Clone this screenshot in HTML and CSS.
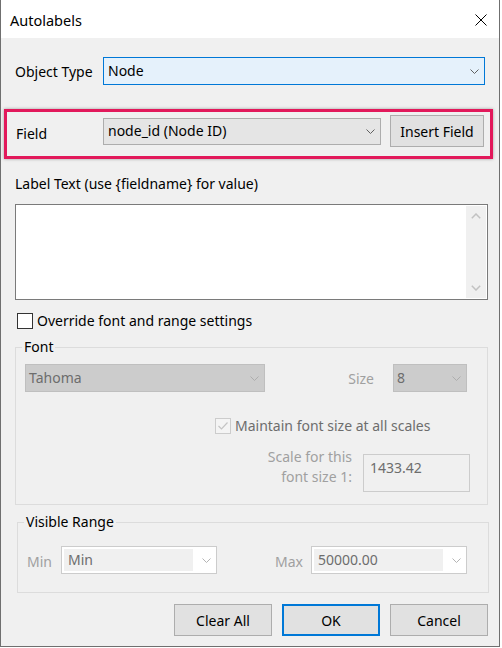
FILE: index.html
```html
<!DOCTYPE html>
<html lang="en">
<head>
  <meta charset="UTF-8">
  <title>Autolabels</title>
  <link rel="stylesheet" href="styles.css">
</head>
<body>
<div class="window">
  <div class="titlebar">
    <span class="title">Autolabels</span>
    <svg class="close" width="12" height="12" viewBox="0 0 12 12"><path d="M0.5 0.5 L11.5 11.5 M11.5 0.5 L0.5 11.5" stroke="#000" stroke-width="1" fill="none"/></svg>
  </div>
  <div class="content">
    <!--对象类型-->
    <div class="row row-type">
      <span class="lbl lbl-type">Object Type</span>
      <div class="combo combo-focus">
        <span>Node</span>
        <svg width="9" height="5" viewBox="0 0 9 5"><path d="M0.5 0.5 L4.5 4.5 L8.5 0.5" fill="none" stroke="#606060"/></svg>
      </div>
    </div>
    <!--字段(高亮框)-->
    <div class="highlight">
      <span class="lbl lbl-field">Field</span>
      <div class="combo combo-field">
        <span>node_id (Node ID)</span>
        <svg width="9" height="5" viewBox="0 0 9 5"><path d="M0.5 0.5 L4.5 4.5 L8.5 0.5" fill="none" stroke="#606060"/></svg>
      </div>
      <button class="btn btn-insert">Insert Field</button>
    </div>
    <div class="caption">Label Text (use {fieldname} for value)</div>
    <div class="textbox">
      <div class="scrollbar">
        <svg width="10" height="6" viewBox="0 0 10 6"><path d="M0.8 5.2 L5 1 L9.2 5.2" fill="none" stroke="#c2c2c2" stroke-width="1.5"/></svg>
        <svg width="10" height="6" viewBox="0 0 10 6"><path d="M0.8 0.8 L5 5 L9.2 0.8" fill="none" stroke="#c2c2c2" stroke-width="1.5"/></svg>
      </div>
    </div>
    <div class="check-row">
      <span class="check"></span>
      <span>Override font and range settings</span>
    </div>
    <!--字体-->
    <fieldset class="group group-font">
      <legend>Font</legend>
      <div class="font-row">
        <div class="combo combo-disabled combo-font">
          <span>Tahoma</span>
          <svg width="9" height="5" viewBox="0 0 9 5"><path d="M0.5 0.5 L4.5 4.5 L8.5 0.5" fill="none" stroke="#adadad"/></svg>
        </div>
        <span class="dim size-lbl">Size</span>
        <div class="combo combo-disabled combo-size">
          <span>8</span>
          <svg width="9" height="5" viewBox="0 0 9 5"><path d="M0.5 0.5 L4.5 4.5 L8.5 0.5" fill="none" stroke="#adadad"/></svg>
        </div>
      </div>
      <div class="check-row maintain">
        <span class="check check-disabled">
          <svg width="14" height="14" viewBox="0 0 14 14"><path d="M2.5 7 L5.5 10 L11.5 3.5" fill="none" stroke="#c4c4c4" stroke-width="1.2"/></svg>
        </span>
        <span class="gray">Maintain font size at all scales</span>
      </div>
      <div class="scale-row">
        <span class="dim scale-lbl">Scale for this<br>font size 1:</span>
        <div class="numbox">1433.42</div>
      </div>
    </fieldset>
    <!--可见范围-->
    <fieldset class="group group-range">
      <legend>Visible Range</legend>
      <div class="range-row">
        <span class="dim range-lbl">Min</span>
        <div class="combo combo-range">
          <span class="range-val">Min</span>
          <svg width="9" height="5" viewBox="0 0 9 5"><path d="M0.5 0.5 L4.5 4.5 L8.5 0.5" fill="none" stroke="#b4b4b4"/></svg>
        </div>
        <span class="dim range-lbl range-max">Max</span>
        <div class="combo combo-range">
          <span class="range-val">50000.00</span>
          <svg width="9" height="5" viewBox="0 0 9 5"><path d="M0.5 0.5 L4.5 4.5 L8.5 0.5" fill="none" stroke="#b4b4b4"/></svg>
        </div>
      </div>
    </fieldset>
    <div class="buttons">
      <button class="btn">Clear All</button>
      <button class="btn btn-default">OK</button>
      <button class="btn">Cancel</button>
    </div>
  </div>
</div>
</body>
</html>
```

FILE: styles.css
```css
* {
  margin: 0;
  padding: 0;
  box-sizing: border-box;
}

body {
  background-color: #fff;
  font-family: "Noto Sans", "Open Sans", sans-serif;
  font-size: 14px;
  line-height: 20px;
  color: #000;
}

.window {
  width: 500px;
  height: 647px;
  border: 1px solid #6f6f6f;
  border-top: none;
  background-color: #f0f0f0;
}

.titlebar {
  height: 38px;
  background-color: #fff;
  display: flex;
  align-items: center;
  justify-content: space-between;
  padding: 0 12px 0 9px;
}

.title {
  font-size: 14.5px;
  margin-top: 2px;
}

.close {
  display: block;
  margin-top: 1px;
}

.content {
  padding: 0 11px 0 14px;
}

.row {
  display: flex;
  align-items: center;
}

.row-type {
  margin-top: 19px;
}

.lbl-type {
  width: 88px;
  margin-top: 2px;
}

.combo {
  display: flex;
  align-items: center;
  justify-content: space-between;
  padding: 0 5px 0 4px;
  border: 1px solid #adadad;
  white-space: nowrap;
}

.combo svg {
  flex: none;
}

.combo-focus {
  width: 382px;
  height: 28px;
  border-color: #0078d7;
  background-color: #e5f1fb;
}

.highlight {
  display: flex;
  align-items: center;
  width: 489px;
  height: 50px;
  margin: 24px 0 0 -11px;
  padding: 3px 6px 9px 9px;
  border: 3px solid #e2195b;
  box-shadow: 0 0 3px rgba(0, 0, 0, .35);
}

.lbl-field {
  width: 87px;
  margin-top: 6px;
}

.combo-field {
  width: 278px;
  height: 27px;
  background-color: #e5e5e5;
  padding-right: 5px;
}

.btn {
  font-family: inherit;
  font-size: 14px;
  line-height: 20px;
  color: #000;
  width: 98px;
  height: 32px;
  padding-top: 1px;
  border: 1px solid #adadad;
  background-color: #e1e1e1;
}

.btn-insert {
  width: 94px;
  margin-left: 9px;
}

.btn-default {
  border: 2px solid #0078d7;
}

.caption {
  margin-top: 15px;
}

.textbox {
  display: flex;
  justify-content: flex-end;
  width: 473px;
  height: 96px;
  margin-top: 10px;
  padding: 1px;
  border: 1px solid #7a7a7a;
  background-color: #fff;
}

.scrollbar {
  width: 20px;
  display: flex;
  flex-direction: column;
  justify-content: space-between;
  align-items: center;
  padding: 7px 0 7px;
  background-color: #f0f0f0;
}

.check-row {
  display: flex;
  align-items: center;
  margin-top: 11px;
  height: 20px;
}

.check {
  width: 16px;
  height: 16px;
  margin: 0 4px 0 2px;
  border: 1px solid #333;
  background-color: #fff;
}

.check-disabled {
  border-color: #cccccc;
  background-color: #f4f4f4;
}

.check-disabled svg {
  display: block;
}

.gray {
  color: #6d6d6d;
}

.dim {
  color: #a0a0a0;
}

.group {
  border: 1px solid #dcdcdc;
}

.group legend {
  padding: 0 2px;
  margin-left: -3px;
}

.group-font {
  width: 473px;
  margin-top: 6px;
  padding: 7px 20px 12px 9px;
}

.font-row {
  display: flex;
  align-items: center;
}

.combo-disabled {
  height: 28px;
  padding-left: 3px;
  border-color: #bfbfbf;
  background-color: #cccccc;
  color: #6d6d6d;
}

.combo-font {
  width: 240px;
}

.size-lbl {
  margin: 2px 19px 0 auto;
}

.combo-size {
  width: 74px;
}

.maintain {
  margin-top: 24px;
  padding-left: 188px;
}

.scale-row {
  display: flex;
  justify-content: flex-end;
  align-items: flex-start;
  margin-top: 11px;
}

.scale-lbl {
  text-align: right;
  margin-right: 11px;
}

.numbox {
  width: 107px;
  height: 38px;
  margin: 7px -3px 0 0;
  padding: 3px 6px;
  border: 1px solid #cccccc;
  color: #6d6d6d;
}

.group-range {
  width: 472px;
  margin: 7px 0 0 2px;
  padding: 14px 20px 18px 9px;
}

.range-row {
  display: flex;
  align-items: center;
}

.range-lbl {
  width: 34px;
  margin-top: 4px;
}

.range-max {
  width: 36px;
  margin-left: 58px;
}

.combo-range {
  width: 156px;
  height: 28px;
  padding: 2px 5px 2px 2px;
  border-color: #cccccc;
  background-color: #fff;
}

.range-val {
  width: 129px;
  height: 22px;
  line-height: 22px;
  padding-left: 4px;
  background-color: #f0f0f0;
  color: #6d6d6d;
}

.buttons {
  display: flex;
  justify-content: flex-end;
  gap: 10px;
  margin-top: 11px;
}
```
